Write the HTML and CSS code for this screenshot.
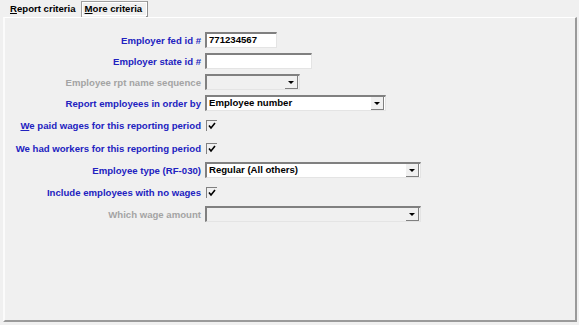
FILE: index.html
```html
<!DOCTYPE html>
<html lang="en">
<head>
    <meta charset="UTF-8">
    <title>Report criteria</title>
    <link rel="stylesheet" href="styles.css">
</head>
<body>
    <div class="tabs">
        <span class="tab"><u>R</u>eport criteria</span>
        <span class="tab active"><u>M</u>ore criteria</span>
    </div>

    <div class="panel">
        <div class="form">
            <label class="lbl">Employer fed id #</label>
            <div class="field"><span class="input w-fed">771234567</span></div>

            <label class="lbl">Employer state id #</label>
            <div class="field"><span class="input w-state"></span></div>

            <label class="lbl off">Employee rpt name sequence</label>
            <div class="field"><span class="input select disabled w-seq"><span class="arrow"></span></span></div>

            <label class="lbl">Report employees in order by</label>
            <div class="field"><span class="input select w-order">Employee number<span class="arrow"></span></span></div>

            <label class="lbl"><u>W</u>e paid wages for this reporting period</label>
            <div class="field tall"><span class="check"><svg viewBox="0 0 10 10"><polyline points="2,4.5 4,7 8,2"/></svg></span></div>

            <label class="lbl">We had workers for this reporting period</label>
            <div class="field tall"><span class="check"><svg viewBox="0 0 10 10"><polyline points="2,4.5 4,7 8,2"/></svg></span></div>

            <label class="lbl">Employee type (RF-030)</label>
            <div class="field"><span class="input select w-type">Regular (All others)<span class="arrow"></span></span></div>

            <label class="lbl">Include employees with no wages</label>
            <div class="field tall"><span class="check"><svg viewBox="0 0 10 10"><polyline points="2,4.5 4,7 8,2"/></svg></span></div>

            <label class="lbl off">Which wage amount</label>
            <div class="field"><span class="input select disabled w-type"><span class="arrow"></span></span></div>
        </div>
    </div>
</body>
</html>
```

FILE: styles.css
```css
body {
    margin: 0;
    width: 579px;
    height: 325px;
    background: #f0f0f0;
    font-family: "Liberation Sans", Arial, sans-serif;
    font-size: 9.6px;
    font-weight: bold;
    overflow: hidden;
}
.tabs {
    display: flex;
    align-items: flex-end;
    height: 17px;
    padding-left: 10px;
    gap: 5px;
}
.tab {
    color: #000;
    padding: 0 0 2px;
    line-height: 12px;
}
.tab.active {
    background: #f0f0f0;
    border: 1px solid #a0a0a0;
    border-right: 2px solid #909090;
    border-bottom: none;
    padding: 1px 4px 2px 3px;
    outline: 1px solid #fff;
    outline-offset: -2px;
}
.panel {
    margin-left: 3px;
    width: 570px;
    height: 302px;
    border-top: 1px solid #fff;
    border-left: 2px solid #fbfbfb;
    border-right: 2px solid #9a9a9a;
    border-bottom: 2px solid #9a9a9a;
}
.form {
    display: grid;
    grid-template-columns: 196px auto;
    column-gap: 4px;
    row-gap: 5px;
    padding-top: 14px;
    align-items: center;
}
.lbl {
    text-align: right;
    color: #2222c0;
    white-space: nowrap;
}
.lbl.off {
    color: #a4a4a4;
}
.field {
    display: flex;
    align-items: center;
    height: 16px;
}
.field.tall {
    height: 18px;
}
.input {
    position: relative;
    box-sizing: border-box;
    height: 16px;
    background: #fff;
    border-top: 2px solid #808080;
    border-left: 2px solid #808080;
    border-right: 1px solid #e4e4e4;
    border-bottom: 1px solid #e4e4e4;
    padding-left: 2px;
    line-height: 12px;
    color: #000;
}
.input.disabled {
    background: #f0f0f0;
}
.arrow {
    position: absolute;
    right: 1px;
    top: 0;
    width: 12px;
    height: 12px;
    background: #f0f0f0;
    border-right: 1px solid #808080;
    border-bottom: 1px solid #808080;
}
.arrow::after {
    content: "";
    position: absolute;
    left: 3px;
    top: 5px;
    border-left: 3px solid transparent;
    border-right: 3px solid transparent;
    border-top: 3px solid #000;
}
.w-fed { width: 72px; }
.w-state { width: 107px; }
.w-seq { width: 95px; }
.w-order { width: 181px; }
.w-type { width: 216px; }
.check {
    display: inline-block;
    box-sizing: border-box;
    width: 11px;
    height: 11px;
    margin-left: 1px;
    border-top: 1px solid #808080;
    border-left: 1px solid #808080;
}
.check svg {
    display: block;
    width: 10px;
    height: 10px;
    fill: none;
    stroke: #000;
    stroke-width: 1.6;
}
```
